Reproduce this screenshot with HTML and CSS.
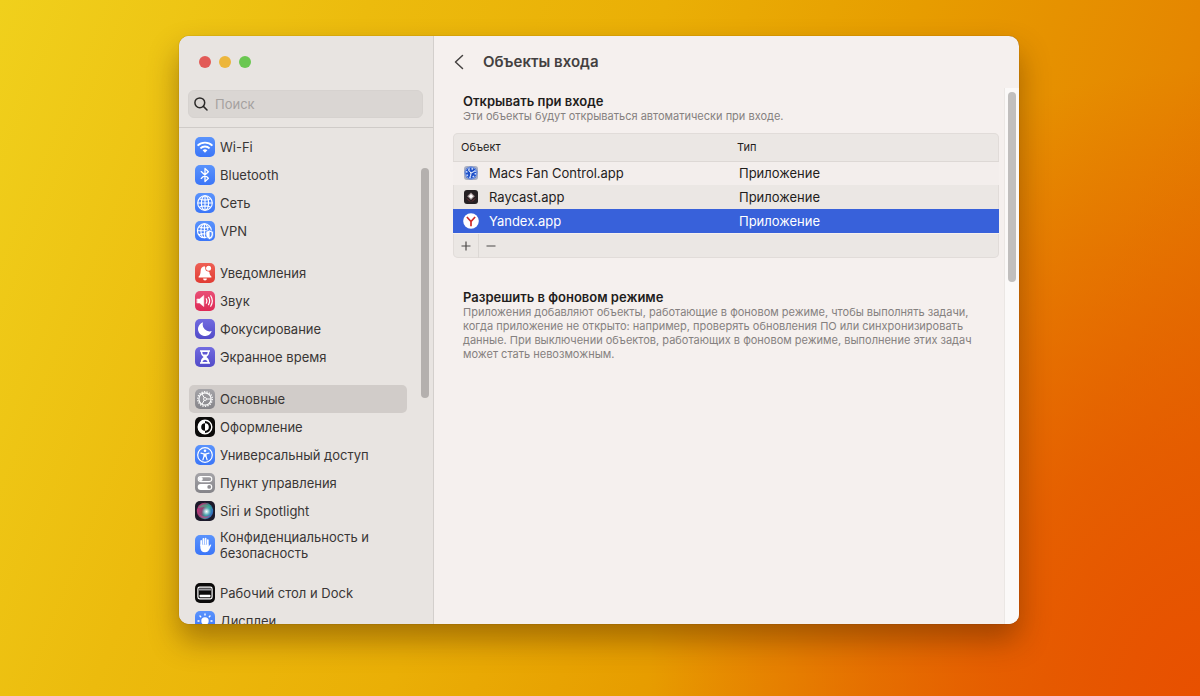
FILE: index.html
```html
<!DOCTYPE html>
<html lang="ru">
<head>
<meta charset="utf-8">
<title>Объекты входа</title>
<link rel="stylesheet" href="styles.css">
</head>
<body>
<div class="window">
  <aside class="sidebar">
    <div class="lights">
      <button class="light red" aria-label="Закрыть"></button>
      <button class="light amber" aria-label="Свернуть"></button>
      <button class="light green" aria-label="Развернуть"></button>
    </div>
    <label class="search">
      <svg width="14" height="14" viewBox="0 0 14 14" fill="none" stroke="#2b2928" stroke-width="1.5" stroke-linecap="round"><circle cx="5.8" cy="5.8" r="4.9"/><path d="M9.4 9.4 13 13"/></svg>
      <input type="text" placeholder="Поиск" aria-label="Поиск">
    </label>
    <div class="sidebar-body">
      <nav class="nav">
        <div class="group">
          <a class="item" href="#"><span class="icon blue"><svg viewBox="0 0 20 20" fill="none" stroke="#fff" stroke-width="1.9"><path d="M2.6 8.6a10.6 10.6 0 0 1 14.8 0"/><path d="M5.4 11.4a6.6 6.6 0 0 1 9.2 0"/><path d="M10 15.8 7.6 13.3a3.5 3.5 0 0 1 4.8 0Z" fill="#fff" stroke="none"/></svg></span>Wi-Fi</a>
          <a class="item" href="#"><span class="icon blue"><svg viewBox="0 0 20 20" fill="none" stroke="#fff" stroke-width="1.3" stroke-linejoin="round" stroke-linecap="round"><path d="M6.2 6.6 13.4 13.2 10 16.6V3.4L13.4 6.8 6.2 13.4"/></svg></span>Bluetooth</a>
          <a class="item" href="#"><span class="icon blue"><svg viewBox="0 0 20 20" fill="none" stroke="#fff" stroke-width="1.1"><circle cx="10" cy="10" r="7.3"/><ellipse cx="10" cy="10" rx="3.6" ry="7.3"/><path d="M10 2.7v14.6M2.7 10h14.6M4.2 5.8q5.8 2.6 11.6 0M4.2 14.2q5.8-2.6 11.6 0"/></svg></span>Сеть</a>
          <a class="item" href="#"><span class="icon blue"><svg viewBox="0 0 20 20" fill="none" stroke="#fff" stroke-width="1.1"><circle cx="9.4" cy="9.8" r="7"/><ellipse cx="9.4" cy="9.8" rx="3.5" ry="7"/><path d="M9.4 2.8v14M2.4 9.8h14M3.8 5.8q5.6 2.4 11.2 0M3.8 13.8q5.6-2.4 11.2 0"/><path d="M14.6 9 18.400 10.500v3.500q0 2.800-3.800 4.600-3.800-1.800-3.800-4.600v-3.500Z" fill="#fff" stroke="#4b86fb" stroke-width=".8"/><path d="M14.600 10.800v5.800q2-1.200 2-2.900v-2.100Z" fill="#4b86fb" stroke="none"/></svg></span>VPN</a>
        </div>
        <div class="group">
          <a class="item" href="#"><span class="icon coral"><svg viewBox="0 0 20 20" fill="#fff"><path d="M9.600 3.200c-2.700.3-3.900 2.300-4 5-.1 2.800-.7 4.300-2 5.400v.9h12.800v-.9c-1.200-1-1.800-2.200-2-4.300"/><path d="M8.100 15.500h3.800a1.900 1.900 0 0 1-3.800 0Z"/><circle cx="13.600" cy="5.200" r="3.300" fill="#ea5045"/><circle cx="13.600" cy="5.200" r="2.500"/></svg></span>Уведомления</a>
          <a class="item" href="#"><span class="icon pink"><svg viewBox="0 0 20 20" fill="none" stroke="#fff" stroke-width="1.200" stroke-linecap="round"><path d="M2.200 8h2.300l4.300-3.600v11.200L4.500 12H2.200Z" fill="#fff" stroke-width=".5" stroke-linejoin="round"/><path d="M11.300 7.800q1.300 2.200 0 4.400M13.500 6.300q2.300 3.700 0 7.400M15.700 4.800q3.300 5.200 0 10.400"/></svg></span>Звук</a>
          <a class="item" href="#"><span class="icon violet"><svg viewBox="0 0 20 20" fill="#fff"><path d="M8.100 3.300A7 7 0 1 0 16.700 12.100 6.900 6.900 0 0 1 8.100 3.300Z"/></svg></span>Фокусирование</a>
          <a class="item" href="#"><span class="icon violet"><svg viewBox="0 0 20 20"><path d="M5 3.300h10v1.500h-.8c0 2.700-1.200 4-2.800 5.200 1.600 1.200 2.800 2.500 2.800 5.200h.8v1.500H5v-1.500h.8c0-2.700 1.200-4 2.800-5.200C7 8.800 5.800 7.500 5.800 4.800H5Z" fill="#fff"/><path d="M7.300 5h5.400q-.1 1.600-.9 2.500H8.200q-.8-.9-.9-2.500ZM7.400 15q.4-1.700 2.600-2.300 2.200.6 2.600 2.300Z" fill="#625ad3"/></svg></span>Экранное время</a>
        </div>
        <div class="group">
          <a class="item current" href="#" aria-current="page"><span class="icon gray"><svg viewBox="0 0 20 20" fill="none" stroke="#fff"><circle cx="10" cy="10" r="7.300" stroke-width="1.300" stroke-dasharray="1.300 1.248"/><circle cx="10" cy="10" r="6.100" stroke-width="1.200"/><circle cx="10" cy="10" r="1.500" stroke-width=".9"/><path d="M11.500 10H16M9.200 8.700 7 4.900M9.200 11.300 7 15.100" stroke-width="1"/></svg></span>Основные</a>
          <a class="item" href="#"><span class="icon black"><svg viewBox="0 0 20 20"><circle cx="10" cy="10" r="6.800" fill="none" stroke="#fff" stroke-width="1.400"/><path d="M10 3.200a6.800 6.800 0 0 0 0 13.600v-3a3.800 3.800 0 0 1 0-7.600Z" fill="#fff"/><path d="M10 6.200a3.800 3.800 0 0 1 0 7.600Z" fill="#fff"/></svg></span>Оформление</a>
          <a class="item" href="#"><span class="icon blue"><svg viewBox="0 0 20 20" fill="none" stroke="#fff" stroke-linecap="round"><circle cx="10" cy="10" r="7.300" stroke-width="1.200"/><circle cx="10" cy="5.800" r="1.300" fill="#fff" stroke="none"/><path d="M6 8.200 9 8.900v2.400l-1.100 3.600M14 8.200l-3 .7v2.400l1.100 3.600M10 8.800v2.400" stroke-width="1.200"/></svg></span>Универсальный доступ</a>
          <a class="item" href="#"><span class="icon gray"><svg viewBox="0 0 20 20"><rect x="3.200" y="3.600" width="13.600" height="5" rx="2.500" fill="none" stroke="#fff" stroke-width="1.100"/><circle cx="5.800" cy="6.100" r="2" fill="#fff"/><rect x="2.700" y="10.900" width="14.600" height="6" rx="3" fill="#fff"/><circle cx="14.200" cy="13.900" r="1.900" fill="#8e8d92"/></svg></span>Пункт управления</a>
          <a class="item" href="#"><span class="icon siri"><svg viewBox="0 0 20 20"><defs><linearGradient id="orb" x1="0" y1=".3" x2="1" y2=".7"><stop offset="0" stop-color="#c9327c"/><stop offset=".35" stop-color="#8b4670"/><stop offset=".6" stop-color="#2f9a97"/><stop offset="1" stop-color="#3567c8"/></linearGradient><radialGradient id="glow"><stop offset="0" stop-color="#fff"/><stop offset=".35" stop-color="#c9e9ee" stop-opacity=".8"/><stop offset="1" stop-color="#6cc7cf" stop-opacity="0"/></radialGradient></defs><circle cx="10" cy="10" r="8.200" fill="url(#orb)"/><path d="M3 7q7-8 14 1-7-3-14-1Z" fill="#4fb58d" opacity=".6"/><path d="M3 12q6 6 13 2-4 4-7 3.500T3 12Z" fill="#e23c88" opacity=".6"/><circle cx="11.500" cy="10.500" r="5" fill="url(#glow)"/></svg></span>Siri и Spotlight</a>
          <a class="item tall" href="#"><span class="icon blue"><svg viewBox="0 0 20 20" fill="none" stroke="#fff" stroke-width="1.700" stroke-linecap="round"><path d="M6.200 10.500V5.900M8.400 9V3.900M10.600 9V3.500M12.800 10V5"/><path d="M5.350 9.500h8.300v2.100l1.200-1.700q.8-.9 1.500-.1-.8 2-1.700 3.900-1.500 3.500-4.600 3.500-4.700 0-4.700-5Z" fill="#fff" stroke="none"/></svg></span>Конфиденциальность и<br>безопасность</a>
        </div>
        <div class="group">
          <a class="item" href="#"><span class="icon black"><svg viewBox="0 0 20 20"><rect x="2.900" y="4.200" width="14.200" height="11.600" rx="1.700" fill="none" stroke="#fff" stroke-width="1.200"/><path d="M4 5.500h12v2H4Z" fill="#98989c"/><rect x="4.600" y="11.700" width="10.800" height="2.600" rx=".5" fill="#fff"/></svg></span>Рабочий стол и Dock</a>
          <a class="item" href="#"><span class="icon blue"><svg viewBox="0 0 20 20" stroke="#fff" stroke-width="1.400" stroke-linecap="round"><circle cx="10" cy="10" r="3.700" fill="#fff" stroke="none"/><path d="M10 3v1M10 16v1M3 10h1M16 10h1M5 5l.7.7M14.300 14.300l.7.7M5 15l.7-.7M14.300 5.700 15 5"/></svg></span>Дисплеи</a>
        </div>
      </nav>
      <div class="track"><div class="thumb"></div></div>
    </div>
  </aside>
  <main class="content">
    <header class="bar">
      <button class="back" aria-label="Назад"><svg width="10" height="16" viewBox="0 0 10 16" fill="none" stroke="#454241" stroke-width="1.500" stroke-linecap="round" stroke-linejoin="round"><path d="M8.500 1.500 1.500 8l7 6.500"/></svg></button>
      <h1>Объекты входа</h1>
    </header>
    <div class="scroller">
      <div class="page">
        <section>
          <h2>Открывать при входе</h2>
          <p>Эти объекты будут открываться автоматически при входе.</p>
          <div class="box">
            <table>
              <thead><tr><th class="name">Объект</th><th>Тип</th></tr></thead>
              <tbody>
                <tr><td><span class="app"><svg width="16" height="16" viewBox="0 0 16 16"><rect x="1" y="1" width="14" height="14" rx="3" fill="#a6adc2"/><circle cx="8" cy="8" r="6.400" fill="#1f50c8"/><g fill="none" stroke="#cfdefc"><circle cx="8" cy="8" r="4.400" stroke-width="1.600" stroke-dasharray="1.600 1.856"/><circle cx="8" cy="8" r="5.900" stroke-width=".5"/></g><path d="M8 8 5.500 5M8 8l3.300-1.600M8 8l-.5 3.500" stroke="#fff" stroke-width="1"/></svg>Macs Fan Control.app</span></td><td>Приложение</td></tr>
                <tr><td><span class="app"><svg width="16" height="16" viewBox="0 0 16 16"><rect x="1" y="1" width="14" height="14" rx="3" fill="#252023"/><path d="M8 3.400 11.800 7.200 8 11 4.200 7.200Z" fill="#a89799"/><path d="M8 5 10.200 7.200 8 9.400 5.800 7.200Z" fill="#fff"/><path d="m4 9.500 3 3M9 12.500l3-3" stroke="#8d3942" stroke-width=".8"/></svg>Raycast.app</span></td><td>Приложение</td></tr>
                <tr class="selected"><td><span class="app"><svg width="16" height="16" viewBox="0 0 16 16"><circle cx="8" cy="8" r="7.800" fill="#fff"/><path d="M3.900 4 8 8.500 12.100 4M8 8.300v5" fill="none" stroke="#cf2a2b" stroke-width="1.700"/></svg>Yandex.app</span></td><td>Приложение</td></tr>
              </tbody>
            </table>
            <div class="tools">
              <button aria-label="Добавить"><svg width="10" height="10" viewBox="0 0 10 10" stroke="#4d4a49" stroke-width="1.200"><path d="M5 .5v9M.5 5h9"/></svg></button>
              <button aria-label="Удалить"><svg width="10" height="10" viewBox="0 0 10 10" stroke="#4d4a49" stroke-width="1.200"><path d="M.5 5h9"/></svg></button>
            </div>
          </div>
        </section>
        <section>
          <h2>Разрешить в фоновом режиме</h2>
          <p>Приложения добавляют объекты, работающие в фоновом режиме, чтобы выполнять задачи,<br>когда приложение не открыто: например, проверять обновления ПО или синхронизировать<br>данные. При выключении объектов, работающих в фоновом режиме, выполнение этих задач<br>может стать невозможным.</p>
        </section>
      </div>
      <div class="track main-track"><div class="thumb"></div></div>
    </div>
  </main>
</div>
</body>
</html>
```
FILE: styles.css
```css
* { box-sizing: border-box; }

body {
  margin: 0;
  height: 100vh;
  padding: 36px 181px 72px 179px;
  display: grid;
  grid-template-rows: minmax(0, 1fr);
  overflow: hidden;
  font-family: Inter, "Noto Sans", sans-serif;
  font-size: 13px;
  color: #1f1d1c;
  background:
    radial-gradient(ellipse 46% 90% at 100% 100%, #e85000 0%, rgba(230, 84, 0, .75) 40%, rgba(228, 100, 0, 0) 100%),
    linear-gradient(112deg, #f0d01c 0%, #ecbb0d 25%, #eaaf06 45%, #e79d00 62%, #e58600 82%, #e06c00 100%);
}

button { border: 0; padding: 0; background: none; font: inherit; display: grid; place-items: center; }
svg { display: block; flex: none; }
h1, h2, p { margin: 0; }

.window {
  display: grid;
  grid-template-columns: 255px minmax(0, 1fr);
  grid-template-rows: minmax(0, 1fr);
  border-radius: 10px;
  overflow: hidden;
  background: #f5f0ee;
  box-shadow: 0 0 1px rgba(60, 30, 0, .6), 0 16px 30px rgba(70, 30, 0, .42);
}

/* Sidebar */
.sidebar {
  display: flex;
  flex-direction: column;
  background: #e8e4e1;
  border-right: 1px solid #d3cfcc;
}
.lights { display: flex; gap: 8px; padding: 20px 20px 0; }
.light { width: 12px; height: 12px; border-radius: 50%; }
.red { background: #e25a57; }
.amber { background: #ecb63c; }
.green { background: #6ac751; }

.search {
  display: flex;
  align-items: center;
  gap: 7px;
  height: 28px;
  margin: 22px 10px 9px 9px;
  padding: 0 5px;
  border: 1px solid #d6d2cf;
  border-radius: 6px;
  background: #dad6d3;
}
.search input {
  flex: 1;
  min-width: 0;
  border: 0;
  padding: 0;
  outline: 0;
  background: none;
  font: inherit;
}
.search input::placeholder { color: #a5a19f; opacity: 1; }

.sidebar-body {
  flex: 1;
  min-height: 0;
  display: flex;
  border-top: 1px solid #cfcbc8;
  overflow: hidden;
}
.nav {
  flex: 1;
  min-width: 0;
  padding: 5px 14px 0 10px;
  display: flex;
  flex-direction: column;
  gap: 14px;
}
.group { flex: none; }
.item {
  display: flex;
  align-items: center;
  gap: 5px;
  height: 28px;
  padding: 0 6px;
  border-radius: 5px;
  color: #393635;
  line-height: 16px;
  text-decoration: none;
  white-space: nowrap;
}
.item.tall { height: 40px; }
.item.current { background: #d1ccc9; }
.icon { flex: none; width: 20px; height: 20px; border-radius: 5px; overflow: hidden; }
.blue { background: linear-gradient(#5a93fc, #3b76f8); }
.coral { background: linear-gradient(#ee6055, #e13c34); }
.pink { background: linear-gradient(#e94f76, #de2a55); }
.violet { background: linear-gradient(#726be0, #524bc8); }
.gray { background: linear-gradient(#a5a4a8, #858489); }
.black { background: #0c0b0b; }
.siri { background: #1c1a2b; }

.track { flex: none; width: 12px; padding-top: 40px; }
.thumb { width: 8px; height: 230px; border-radius: 4px; background: #b4b0ae; }

/* Content pane */
.content { display: flex; flex-direction: column; min-width: 0; }
.bar { display: flex; align-items: center; gap: 19px; height: 52px; padding-left: 19px; }
.back { width: 11px; height: 24px; }
h1 { font-size: 15px; line-height: 20px; font-weight: 600; color: #434040; }

.scroller { flex: 1; min-height: 0; display: flex; }
.page {
  flex: 1;
  min-width: 0;
  padding: 5px 5px 0 19px;
  display: flex;
  flex-direction: column;
  gap: 31px;
}
h2 { padding-left: 10px; font-size: 13px; line-height: 16px; font-weight: 600; }
p { padding-left: 10px; font-size: 11px; line-height: 14px; color: #858180; white-space: nowrap; }

.box {
  margin-top: 10px;
  border-radius: 5px;
  background: #ebe7e4;
  box-shadow: inset 0 0 0 1px #e1dcd9;
  overflow: hidden;
}
table { width: 100%; border-collapse: collapse; table-layout: fixed; }
th { height: 28px; padding: 0 8px; font-size: 11px; font-weight: 400; text-align: left; border-bottom: 1px solid #ddd8d5; }
.name { width: 276px; }
td { height: 24px; padding: 0 10px; }
tbody tr:nth-child(odd) { background: #f3eeec; }
tbody tr.selected { background: #3861da; color: #fff; }
.app { display: flex; align-items: center; gap: 10px; }
.tools { display: flex; height: 25px; border-top: 1px solid #f5f0ee; }
.tools button { width: 25px; }
.tools button + button { border-left: 1px solid #dcd8d5; }

.main-track { width: 15px; padding: 4px 0 0 3px; background: #fbf9f8; border-left: 1px solid #ebe7e4; }
.main-track .thumb { height: 190px; background: #c1bfbe; }
```
